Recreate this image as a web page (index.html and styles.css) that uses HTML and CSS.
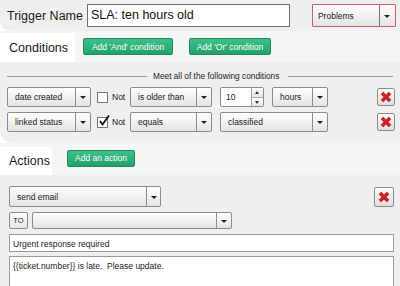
FILE: index.html
```html
<!DOCTYPE html>
<html lang="en">
  <head>
    <meta charset="UTF-8" />
    <title>Trigger</title>
    <link rel="stylesheet" href="styles.css">
  </head>
  <body>
    <div class="top">
      <span class="big-label">Trigger Name</span>
      <div class="name-input">SLA: ten hours old</div>
      <div class="sel sel-problems">
        <span class="sel-text">Problems</span>
        <span class="arr"></span>
      </div>
    </div>

    <div class="head head-cond">
      <span class="title">Conditions</span>
      <button class="btn btn-and">Add 'And' condition</button>
      <button class="btn btn-or">Add 'Or' condition</button>
    </div>

    <div class="panel panel-cond">
      <div class="sep">
        <span class="line line-left"></span>
        <span class="sep-text">Meet all of the following conditions</span>
        <span class="line line-right"></span>
      </div>
      <div class="row">
        <div class="sel w-field"><span class="sel-text">date created</span><span class="arr"></span></div>
        <span class="check"></span>
        <span class="not">Not</span>
        <div class="sel w-op"><span class="sel-text">is older than</span><span class="arr"></span></div>
        <div class="spin">
          <span class="spin-val">10</span>
          <span class="spin-btns"><span class="up"></span><span class="down"></span></span>
        </div>
        <div class="sel w-unit"><span class="sel-text">hours</span><span class="arr"></span></div>
        <button class="del del-cond"><svg width="12" height="12" viewBox="0 0 12 12"><path d="M1 3.2 L3.2 1 L6 3.8 L8.8 1 L11 3.2 L8.2 6 L11 8.8 L8.8 11 L6 8.2 L3.2 11 L1 8.8 L3.8 6 Z" fill="#d42020" stroke="#9a1010" stroke-width="0.5"/></svg></button>
      </div>
      <div class="row">
        <div class="sel w-field"><span class="sel-text">linked status</span><span class="arr"></span></div>
        <span class="check checked"><svg width="12" height="12" viewBox="0 0 12 12"><path d="M2 6 L4.5 9.5 L11 0.5" fill="none" stroke="#111" stroke-width="1.8"/></svg></span>
        <span class="not">Not</span>
        <div class="sel w-op"><span class="sel-text">equals</span><span class="arr"></span></div>
        <div class="sel w-value"><span class="sel-text">classified</span><span class="arr"></span></div>
        <button class="del del-cond"><svg width="12" height="12" viewBox="0 0 12 12"><path d="M1 3.2 L3.2 1 L6 3.8 L8.8 1 L11 3.2 L8.2 6 L11 8.8 L8.8 11 L6 8.2 L3.2 11 L1 8.8 L3.8 6 Z" fill="#d42020" stroke="#9a1010" stroke-width="0.5"/></svg></button>
      </div>
    </div>

    <div class="head head-act">
      <span class="title">Actions</span>
      <button class="btn btn-action">Add an action</button>
    </div>

    <div class="panel panel-act">
      <div class="act-row">
        <div class="sel w-action"><span class="sel-text">send email</span><span class="arr"></span></div>
        <button class="del del-act"><svg width="12" height="12" viewBox="0 0 12 12"><path d="M1 3.2 L3.2 1 L6 3.8 L8.8 1 L11 3.2 L8.2 6 L11 8.8 L8.8 11 L6 8.2 L3.2 11 L1 8.8 L3.8 6 Z" fill="#d42020" stroke="#9a1010" stroke-width="0.5"/></svg></button>
      </div>
      <div class="to-row">
        <button class="to-btn">TO</button>
        <div class="sel w-to"><span class="sel-text"></span><span class="arr"></span></div>
      </div>
      <div class="field subject">Urgent response required</div>
      <div class="field body-text">{{ticket.number}} is late.&nbsp; Please update.</div>
    </div>
  </body>
</html>
```

FILE: styles.css
```css
* {
  box-sizing: border-box;
}

body {
  margin: 0;
  background: #ffffff;
  font-family: "Liberation Sans", Arial, sans-serif;
  color: #222;
  overflow: hidden;
}

.top {
  display: flex;
  align-items: center;
  height: 31px;
  padding: 0 0 0 7px;
  background: #efefef;
  border-bottom-left-radius: 10px;
}

.big-label,
.title {
  font-size: 12.5px;
  color: #1a1a1a;
}

.name-input {
  margin-left: 4px;
  width: 203px;
  height: 23px;
  padding: 3px 0 0 3px;
  background: #fff;
  border: 1px solid #707070;
  font-size: 12.5px;
  color: #111;
}

/* select look */
.sel {
  display: flex;
  height: 20px;
  background: linear-gradient(#fefefe, #e4e4e4);
  border: 1px solid #8c8c8c;
  border-radius: 2px;
  font-size: 8.5px;
  color: #222;
}

.sel-text {
  flex: 1;
  padding: 0 0 0 7px;
  display: flex;
  align-items: center;
}

.arr {
  width: 14px;
  border-left: 1px solid #8c8c8c;
  position: relative;
}

.arr::after {
  content: "";
  position: absolute;
  left: 4px;
  top: 50%;
  margin-top: -1px;
  border-left: 3px solid transparent;
  border-right: 3px solid transparent;
  border-top: 3px solid #222;
}

.sel-problems {
  margin-left: 22px;
  width: 84px;
  height: 23px;
  border-color: #c8606a;
  border-radius: 1px;
}

.sel-problems .sel-text {
  padding-left: 5px;
}

.sel-problems .arr {
  width: 16px;
  border-left-color: #777;
}

.head {
  display: flex;
  align-items: center;
  background: #f5f5f5;
}

.head-cond {
  height: 31px;
}

.head-act {
  height: 32px;
}

.title {
  align-self: stretch;
  display: flex;
  align-items: center;
  background: #fff;
  padding: 0 6px 0 9px;
}

.head-cond .title {
  width: 75px;
  margin-top: 2px;
}

.head-act .title {
  width: 52px;
  margin-top: 4px;
}

.btn {
  height: 17px;
  padding: 0;
  border: 1px solid #1f8c5e;
  border-radius: 2px;
  background: linear-gradient(#3fc18c, #22a06c);
  color: #fff;
  font-family: "Liberation Sans", Arial, sans-serif;
  font-size: 8.5px;
}

.btn-and {
  margin-left: 8px;
  width: 90px;
}

.btn-or {
  margin-left: 16px;
  width: 82px;
}

.btn-action {
  margin-left: 15px;
  width: 68px;
  margin-top: -2px;
}

.panel {
  background: #efefef;
  border-bottom-left-radius: 12px;
}

.panel-cond {
  height: 81px;
  padding: 9px 0 0 7px;
}

.sep {
  display: flex;
  align-items: center;
  height: 10px;
}

.line {
  height: 1px;
  background: #9a9a9a;
}

.line-left {
  width: 140px;
}

.line-right {
  width: 105px;
  margin-left: 9px;
}

.sep-text {
  margin-left: 6px;
  font-size: 8.3px;
  color: #1a1a1a;
}

.row {
  display: flex;
  align-items: center;
  height: 20px;
  margin-top: 5px;
}

.sep + .row {
  margin-top: 6px;
}

.w-field {
  width: 84px;
}

.w-op {
  width: 82px;
}

.w-unit {
  width: 56px;
  margin-left: 8px;
}

.w-value {
  width: 108px;
  margin-left: 8px;
}

.w-field .arr,
.w-op .arr,
.w-unit .arr,
.w-value .arr {
  width: 15px;
}

.check {
  width: 11px;
  height: 11px;
  margin-left: 6px;
  background: #fff;
  border: 1px solid #777;
  position: relative;
}

.check svg {
  position: absolute;
  left: 0;
  top: -3px;
}

.not {
  margin-left: 4px;
  width: 18px;
  font-size: 8.5px;
  color: #222;
}

.spin {
  display: flex;
  width: 44px;
  height: 20px;
  margin-left: 8px;
  background: #fff;
  border: 1px solid #8c8c8c;
  border-radius: 2px;
  font-size: 8.5px;
}

.spin-val {
  flex: 1;
  padding-left: 5px;
  display: flex;
  align-items: center;
}

.spin-btns {
  width: 12px;
  display: flex;
  flex-direction: column;
  border-left: 1px solid #aaa;
}

.spin-btns span {
  flex: 1;
  position: relative;
  background: linear-gradient(#fdfdfd, #e6e6e6);
}

.spin-btns .down {
  border-top: 1px solid #aaa;
}

.spin-btns .up::after,
.spin-btns .down::after {
  content: "";
  position: absolute;
  left: 3px;
  top: 3px;
  border-left: 2.5px solid transparent;
  border-right: 2.5px solid transparent;
}

.spin-btns .up::after {
  border-bottom: 3px solid #333;
}

.spin-btns .down::after {
  border-top: 3px solid #333;
}

.del {
  display: flex;
  align-items: center;
  justify-content: center;
  padding: 0;
  background: linear-gradient(#fdfdfd, #dedede);
  border: 1px solid #8c8c8c;
  border-radius: 2px;
}

.del-cond {
  width: 18px;
  height: 18px;
  margin-left: 49px;
}

.panel-act {
  height: 111px;
  padding: 11px 6px 0 9px;
  border-bottom-left-radius: 0;
}

.act-row {
  display: flex;
  align-items: center;
}

.w-action {
  width: 152px;
  height: 21px;
}

.del-act {
  width: 20px;
  height: 20px;
  margin-left: auto;
}

.to-row {
  display: flex;
  margin-top: 5px;
  height: 17px;
}

.to-btn {
  width: 19px;
  height: 17px;
  padding: 0;
  background: linear-gradient(#fdfdfd, #e6e6e6);
  border: 1px solid #8c8c8c;
  border-radius: 2px;
  font-family: "Liberation Sans", Arial, sans-serif;
  font-size: 7.5px;
  color: #222;
}

.w-to {
  width: 200px;
  height: 17px;
  margin-left: 4px;
}

.w-to .arr {
  width: 15px;
}

.field {
  background: #fff;
  border: 1px solid #9a9a9a;
  font-size: 8.5px;
  color: #222;
}

.subject {
  height: 18px;
  margin-top: 5px;
  padding: 4px 0 0 3px;
}

.body-text {
  height: 40px;
  margin-top: 4px;
  padding: 4px 0 0 3px;
}
```
